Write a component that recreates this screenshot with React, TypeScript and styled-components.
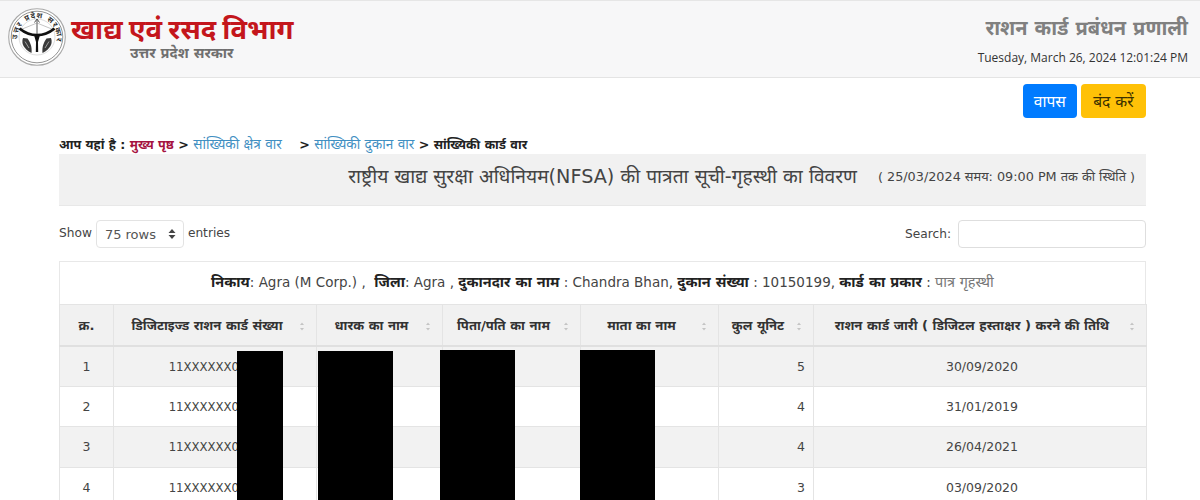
import styled, { createGlobalStyle } from 'styled-components';

// ─── Global ───────────────────────────────────────────────────────────────────

const GlobalStyle = createGlobalStyle`
  html, body {
    margin: 0;
    height: 500px;
    overflow: hidden;
    background: #fff;
  }
  body {
    font-family: "DejaVu Sans", "Noto Sans", sans-serif;
    font-size: 13px;
    color: #333;
  }
  * { box-sizing: border-box; }
`;

// ─── Header ───────────────────────────────────────────────────────────────────

const TopBar = styled.header`
  height: 78px;
  background: #f7f7f8;
  border-top: 1px solid #e6e6e6;
  border-bottom: 1px solid #e4e4e4;
  display: flex;
  justify-content: space-between;
  padding: 7px 12px 0 8px;
`;

const Brand = styled.div`
  display: flex;
  gap: 5px;
`;

const BrandText = styled.div`
  display: flex;
  flex-direction: column;
`;

const BrandTitle = styled.div`
  font-size: 27.5px;
  line-height: 42px;
  font-weight: 700;
  word-spacing: -3.4px;
  color: #c4161c;
  white-space: nowrap;
`;

const BrandSub = styled.div`
  font-size: 14.5px;
  line-height: 18px;
  margin: -6px 0 0 59px;
  font-weight: 700;
  color: #6f6f6f;
`;

const SystemInfo = styled.div`
  display: flex;
  flex-direction: column;
  align-items: flex-end;
`;

const SystemTitle = styled.div`
  font-size: 20px;
  line-height: 28px;
  margin-top: 6px;
  font-weight: 700;
  color: #808080;
`;

const Clock = styled.div`
  font-family: "Open Sans", sans-serif;
  font-size: 12px;
  line-height: 18px;
  margin-top: 7px;
  color: #333;
`;

// ─── Main ─────────────────────────────────────────────────────────────────────

const Main = styled.main`
  padding: 6px 54px 0 59px;
`;

const Actions = styled.div`
  display: flex;
  justify-content: flex-end;
  gap: 4px;
`;

const ActionButton = styled.button<{ $tone: 'blue' | 'yellow' }>`
  height: 34px;
  padding: 0 ${({ $tone }) => ($tone === 'blue' ? '11px' : '12.5px')};
  border: 0;
  border-radius: 4px;
  font: inherit;
  font-size: 15.5px;
  background: ${({ $tone }) => ($tone === 'blue' ? '#007bff' : '#ffc107')};
  color: ${({ $tone }) => ($tone === 'blue' ? '#fff' : '#3a3000')};
`;

const Breadcrumb = styled.div`
  margin-top: 17px;
  height: 19px;
  line-height: 19px;
  font-size: 12.6px;
  font-weight: 700;
  color: #222;
  white-space: pre;
`;

const HomeCrumb = styled.span`
  color: #a5123f;
`;

const LinkCrumb = styled.span`
  color: #3f8fc2;
  font-weight: 400;
  font-size: 13.6px;
`;

const TitlePanel = styled.div`
  height: 52px;
  background: #f1f1f1;
  border-bottom: 1px solid #e8e8e8;
  display: flex;
  justify-content: flex-end;
  align-items: flex-start;
  gap: 21px;
  padding: 10px 11px 0 0;
`;

const PanelTitle = styled.div`
  font-size: 19.2px;
  line-height: 26px;
  color: #444;
`;

const PanelNote = styled.div`
  font-size: 12.8px;
  line-height: 26px;
  color: #444;
`;

const Controls = styled.div`
  display: flex;
  justify-content: space-between;
  align-items: center;
  margin-top: 14px;
  height: 28px;
`;

const ControlGroup = styled.label`
  display: flex;
  align-items: center;
  gap: 4px;
  font-size: 12.2px;
  color: #444;
`;

const RaisedLabel = styled.span`
  padding-bottom: 3px;
`;

const RowsSelect = styled.div`
  width: 88px;
  height: 28px;
  border: 1px solid #e3e3e3;
  border-radius: 4px;
  display: flex;
  align-items: center;
  justify-content: space-between;
  padding: 0 7px 0 8px;
  font-size: 13px;
  color: #555;
`;

const SearchBox = styled.input`
  width: 188px;
  height: 28px;
  margin-left: 3px;
  border: 1px solid #dedede;
  border-radius: 4px;
  background: #fff;
`;

// ─── Table ────────────────────────────────────────────────────────────────────

const TableWrap = styled.div`
  position: relative;
  margin-top: 13px;
`;

const Caption = styled.div`
  height: 43px;
  border: 1px solid #e8e8e8;
  border-bottom: 0;
  text-align: center;
  line-height: 40px;
  font-size: 13.5px;
  color: #444;
  white-space: pre;
`;

const Strong = styled.b`
  font-size: 14.5px;
  color: #222;
`;

const Muted = styled.span`
  font-size: 14.5px;
  color: #777;
`;

const Table = styled.table`
  width: 1087px;
  border-collapse: collapse;
  table-layout: fixed;
  font-size: 12.5px;
  color: #444;
`;

const HeadCell = styled.th<{ $sortable: boolean }>`
  position: relative;
  height: 41px;
  background: #f1f1f1;
  border: 1px solid #e4e4e4;
  border-bottom: 2px solid #e0e0e0;
  font-size: 13.1px;
  font-weight: 700;
  color: #333;
  padding: 0 ${({ $sortable }) => ($sortable ? '20px' : '4px')} 0 4px;
  white-space: nowrap;
`;

const SortMark = styled.svg`
  position: absolute;
  right: 11px;
  top: 16px;
`;

const Row = styled.tr<{ $odd: boolean }>`
  background: ${({ $odd }) => ($odd ? '#f2f2f2' : '#fff')};
`;

const Cell = styled.td<{ $align?: string }>`
  height: 40.5px;
  border: 1px solid #e4e4e4;
  padding: 0 8px;
  text-align: ${({ $align }) => $align ?? 'center'};
`;

const DateCell = styled(Cell)`
  padding-left: 12px;
`;

const CardNumber = styled.span`
  font-size: 11.7px;
`;

const Redaction = styled.div<{ $x: number; $w: number; $t: number }>`
  position: absolute;
  left: ${({ $x }) => $x}px;
  width: ${({ $w }) => $w}px;
  top: ${({ $t }) => $t}px;
  bottom: -60px;
  background: #000;
`;

// ─── Drawings ─────────────────────────────────────────────────────────────────

const Seal = () => (
  <svg width="58" height="58" viewBox="0 0 58 58">
    <circle cx="29" cy="29" r="28.3" fill="#fff" stroke="#a8a8a8" strokeWidth="1.1" />
    <circle cx="29" cy="29" r="25.8" fill="none" stroke="#666" strokeWidth="0.7" />
    <circle cx="29" cy="29" r="18" fill="none" stroke="#bbb" strokeWidth="0.5" />
    <defs>
      <path id="sealRing" d="M9.7 33 A19.6 19.6 0 1 1 48.3 33" />
    </defs>
    <text fontSize="7.6" fontWeight="700" fill="#333">
      <textPath href="#sealRing" startOffset="2" textLength="66" lengthAdjust="spacing">
        उत्तर प्रदेश सरकार
      </textPath>
    </text>
    {/* arrow and bow string */}
    <path d="M29 11.5 V28" stroke="#444" strokeWidth="0.9" />
    <path d="M26.5 14.5 L29 11 L31.5 14.5" fill="none" stroke="#444" strokeWidth="0.9" />
    <path d="M13 21.5 L29 15 L45 21.5" fill="none" stroke="#888" strokeWidth="0.5" />
    {/* bow */}
    <path d="M11.5 20.5 C17 25 23 27.2 29 27.2 C35 27.2 41 25 46.5 20.5" fill="none" stroke="#111" strokeWidth="2.8" />
    <path d="M26 27 L28 34 L27.8 44 H30.2 L30 34 L32 27 Z" fill="#111" />
    {/* fish */}
    <path d="M15 30 C13 35 15.5 41 23.5 45 C24 41 23.5 36 19.5 30.5 Z" fill="#3a3a3a" />
    <path d="M43 30 C45 35 42.5 41 34.5 45 C34 41 34.5 36 38.5 30.5 Z" fill="#3a3a3a" />
    <path d="M17 33.5 L21 40 M41 33.5 L37 40" stroke="#ccc" strokeWidth="0.7" />
  </svg>
);

const SortIcon = () => (
  <SortMark width="6" height="11" viewBox="0 0 6 11">
    <path d="M3 1.5 L5 4 H1 Z" fill="#c4c4c4" />
    <path d="M3 9.5 L5 7 H1 Z" fill="#c4c4c4" />
  </SortMark>
);

// ─── Data ─────────────────────────────────────────────────────────────────────

const columns = [
  { label: 'क्र.', width: 54, sort: false },
  { label: 'डिजिटाइज्ड राशन कार्ड संख्या', width: 203, sort: true },
  { label: 'धारक का नाम', width: 126, sort: true },
  { label: 'पिता/पति का नाम', width: 138, sort: true },
  { label: 'माता का नाम', width: 138, sort: true },
  { label: 'कुल यूनिट', width: 95, sort: true },
  { label: 'राशन कार्ड जारी ( डिजिटल हस्ताक्षर ) करने की तिथि', width: 333, sort: true },
];

const rows = [
  { units: 5, date: '30/09/2020' },
  { units: 4, date: '31/01/2019' },
  { units: 4, date: '26/04/2021' },
  { units: 3, date: '03/09/2020' },
];

const redactions = [
  { x: 178, w: 46, t: 90 },
  { x: 259, w: 75, t: 90 },
  { x: 381, w: 75, t: 89 },
  { x: 521, w: 75, t: 89 },
];

// ─── Component ────────────────────────────────────────────────────────────────

export default function App() {
  return (
    <>
      <GlobalStyle />
      <TopBar>
        <Brand>
          <Seal />
          <BrandText>
            <BrandTitle>खाद्य एवं रसद विभाग</BrandTitle>
            <BrandSub>उत्तर प्रदेश सरकार</BrandSub>
          </BrandText>
        </Brand>
        <SystemInfo>
          <SystemTitle>राशन कार्ड प्रबंधन प्रणाली</SystemTitle>
          <Clock>Tuesday, March 26, 2024 12:01:24 PM</Clock>
        </SystemInfo>
      </TopBar>

      <Main>
        <Actions>
          <ActionButton $tone="blue">वापस</ActionButton>
          <ActionButton $tone="yellow">बंद करें</ActionButton>
        </Actions>

        <Breadcrumb>
          आप यहां है : <HomeCrumb>मुख्य पृष्ठ</HomeCrumb> &gt;{' '}
          <LinkCrumb>सांख्यिकी क्षेत्र वार</LinkCrumb>    &gt;{' '}
          <LinkCrumb>सांख्यिकी दुकान वार</LinkCrumb> &gt; सांख्यिकी कार्ड वार
        </Breadcrumb>

        <TitlePanel>
          <PanelTitle>राष्ट्रीय खाद्य सुरक्षा अधिनियम(NFSA) की पात्रता सूची-गृहस्थी का विवरण</PanelTitle>
          <PanelNote>( 25/03/2024 समय: 09:00 PM तक की स्थिति )</PanelNote>
        </TitlePanel>

        <Controls>
          <ControlGroup>
            <RaisedLabel>Show</RaisedLabel>
            <RowsSelect>
              75 rows
              <svg width="8" height="12" viewBox="0 0 8 12">
                <path d="M4 1 L7.5 5 H0.5 Z M4 11 L7.5 7 H0.5 Z" fill="#444" />
              </svg>
            </RowsSelect>
            <RaisedLabel>entries</RaisedLabel>
          </ControlGroup>
          <ControlGroup>
            Search:
            <SearchBox />
          </ControlGroup>
        </Controls>

        <TableWrap>
          <Caption>
            <Strong>निकाय</Strong>: Agra (M Corp.) ,  <Strong>जिला</Strong>: Agra , <Strong>दुकानदार का नाम</Strong> : Chandra Bhan,{' '}
            <Strong>दुकान संख्या</Strong> : 10150199, <Strong>कार्ड का प्रकार</Strong> : <Muted>पात्र गृहस्थी</Muted>
          </Caption>
          <Table>
            <colgroup>
              {columns.map((c) => (
                <col key={c.label} width={c.width} />
              ))}
            </colgroup>
            <thead>
              <tr>
                {columns.map((c) => (
                  <HeadCell key={c.label} $sortable={c.sort}>
                    {c.label}
                    {c.sort && <SortIcon />}
                  </HeadCell>
                ))}
              </tr>
            </thead>
            <tbody>
              {rows.map((r, i) => (
                <Row key={r.date} $odd={i % 2 === 0}>
                  <Cell>{i + 1}</Cell>
                  <Cell>
                    <CardNumber>11XXXXXX0000</CardNumber>
                  </Cell>
                  <Cell />
                  <Cell />
                  <Cell />
                  <Cell $align="right">{r.units}</Cell>
                  <DateCell>{r.date}</DateCell>
                </Row>
              ))}
            </tbody>
          </Table>
          {redactions.map((b) => (
            <Redaction key={b.x} $x={b.x} $w={b.w} $t={b.t} />
          ))}
        </TableWrap>
      </Main>
    </>
  );
}
